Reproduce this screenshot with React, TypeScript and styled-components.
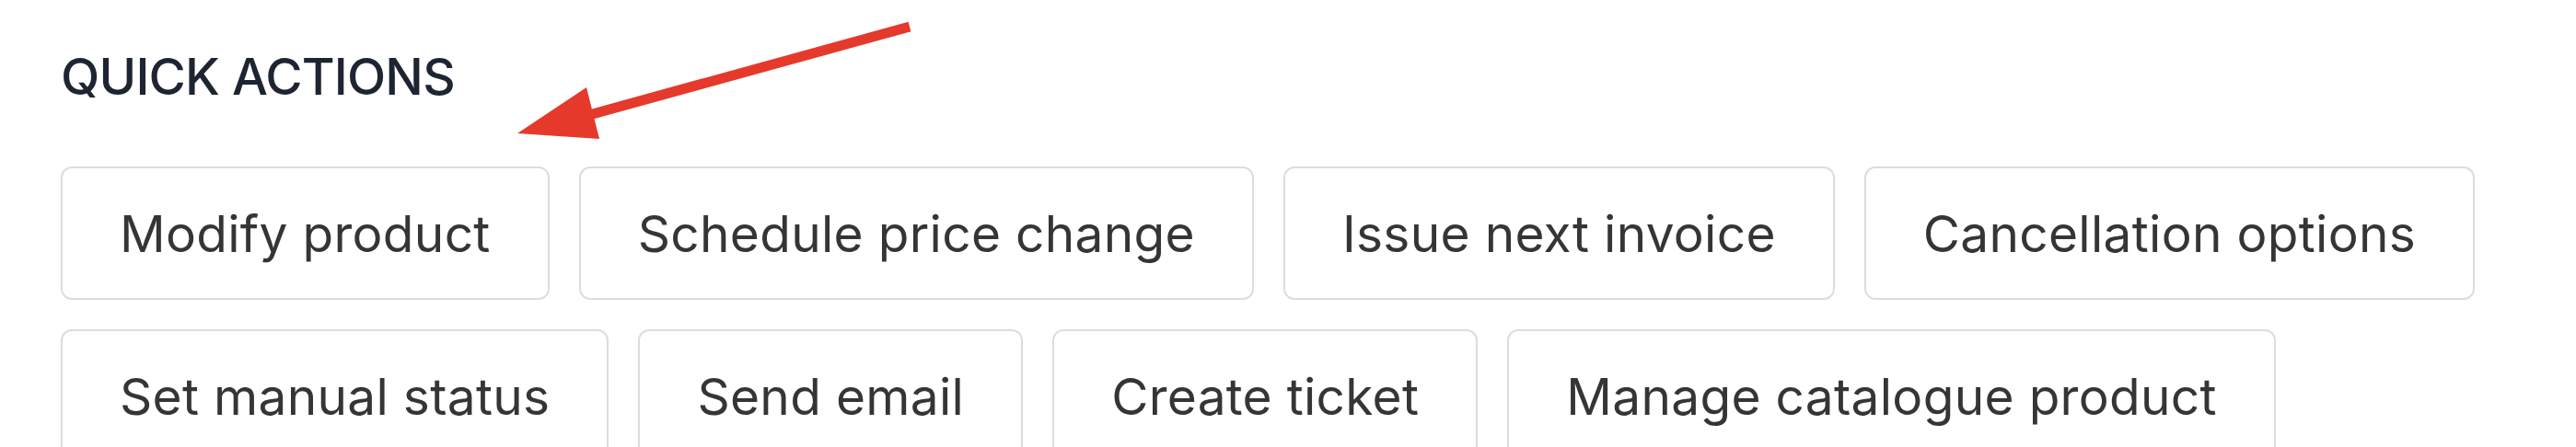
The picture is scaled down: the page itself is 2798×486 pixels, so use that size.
import styled, { createGlobalStyle } from "styled-components";

const GlobalStyle = createGlobalStyle`
  html, body {
    margin: 0;
    padding: 0;
    background: #ffffff;
  }
  body {
    font-family: Inter, "Liberation Sans", Arial, sans-serif;
    -webkit-font-smoothing: antialiased;
  }
`;

const Page = styled.section`
  position: relative;
  width: 2798px;
  height: 486px;
  overflow: hidden;
  padding: 50px 0 0 66px;
  box-sizing: border-box;
`;

const Title = styled.h2`
  margin: 0 0 65px;
  font-size: 55px;
  line-height: 66px;
  font-weight: 500;
  color: #1e2532;
  letter-spacing: -0.8px;
`;

const ActionList = styled.div`
  display: flex;
  flex-wrap: wrap;
  gap: 32px;
`;

const ActionButton = styled.button`
  display: inline-flex;
  align-items: center;
  justify-content: center;
  box-sizing: border-box;
  height: 145px;
  padding: 0 62px;
  background: #ffffff;
  border: 2px solid #dddddd;
  border-radius: 12px;
  font-family: inherit;
  font-size: 55px;
  font-weight: 400;
  letter-spacing: 0.3px;
  color: #353535;
  white-space: nowrap;
  cursor: pointer;
`;

const Annotation = styled.svg`
  position: absolute;
  top: 0;
  left: 0;
  pointer-events: none;
`;

const actions = [
  "Modify product",
  "Schedule price change",
  "Issue next invoice",
  "Cancellation options",
  "Set manual status",
  "Send email",
  "Create ticket",
  "Manage catalogue product",
];

const App = () => {
  return (
    <>
      <GlobalStyle />
      <Page>
        <Title>QUICK ACTIONS</Title>
        <ActionList>
          {actions.map((label) => (
            <ActionButton key={label}>{label}</ActionButton>
          ))}
        </ActionList>
        <Annotation width="2798" height="486" viewBox="0 0 2798 486">
          <line
            x1="988"
            y1="29"
            x2="640"
            y2="125"
            stroke="#e5392b"
            strokeWidth="11"
          />
          <polygon points="562,145 637,95 651,151" fill="#e5392b" />
        </Annotation>
      </Page>
    </>
  );
};

export default App;
